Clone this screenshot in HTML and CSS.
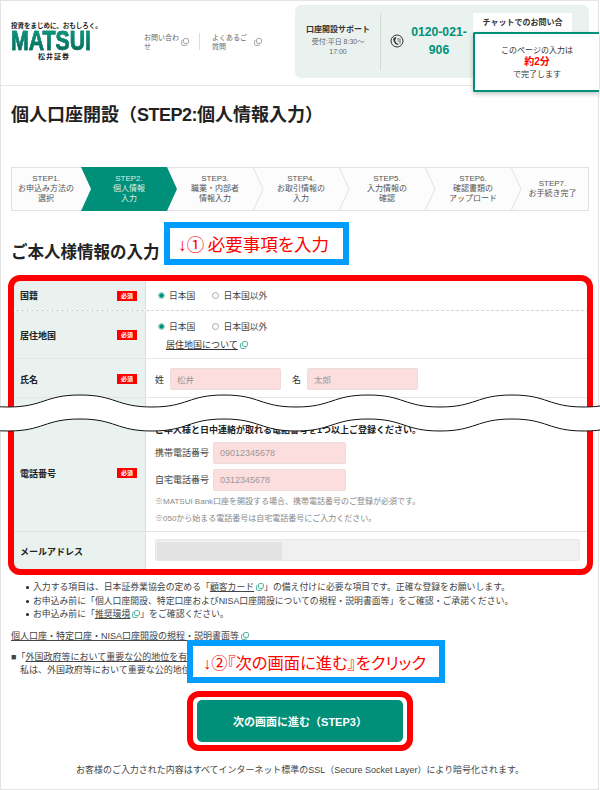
FILE: index.html
```html
<!DOCTYPE html>
<html lang="ja">
<head>
<meta charset="utf-8">
<title>個人口座開設</title>
<link rel="stylesheet" href="styles.css">
</head>
<body>
<svg class="defs" width="0" height="0" aria-hidden="true">
  <symbol id="ext" viewBox="0 0 8 8">
    <rect x="2.6" y="0.6" width="4.8" height="4.8" rx="1.1" fill="none" stroke="currentColor" stroke-width="0.9"/>
    <path d="M1.6 2.2 A1 1 0 0 0 .6 3.2 V6.4 A1 1 0 0 0 1.6 7.4 H4.8 A1 1 0 0 0 5.8 6.4" fill="none" stroke="currentColor" stroke-width="0.9"/>
  </symbol>
</svg>
<div class="page">
  <header class="header">
    <div class="logo">
      <div class="tagline">投資をまじめに、おもしろく。</div>
      <div class="wordmark">MATSUI</div>
      <div class="kanji">松井証券</div>
    </div>
    <a class="hlink hlink-first"><span class="hlink-text">お問い合わせ</span><svg class="ext ext-gray"><use href="#ext"/></svg></a>
    <a class="hlink hlink-second"><span class="hlink-text">よくあるご質問</span><svg class="ext ext-gray"><use href="#ext"/></svg></a>
    <div class="support">
      <div class="hours">
        <div class="hours-title">口座開設サポート</div>
        <div class="hours-text">受付:平日 8:30〜<br>17:00</div>
      </div>
      <svg class="phone-icon" viewBox="0 0 14 14">
        <circle cx="7" cy="7" r="6" fill="none" stroke="#333" stroke-width="1"/>
        <path d="M3.4 4.6C4 3.4 5.4 3 6.4 3.4L5.6 5.2C5.1 5.4 5 6.6 5.6 7.8 6.2 8.9 7 9.4 7.6 9.4L8.8 10.4C7.4 11.4 5.6 10.6 4.4 8.6 3.4 7 3 5.6 3.4 4.6Z" fill="#333"/>
        <path d="M7.2 5H11M7.6 7H11M9 9H11" stroke="#333" stroke-width=".7" fill="none"/>
      </svg>
      <div class="tel">0120-021-<br>906</div>
      <div class="chat">チャットでのお問い合わせ</div>
    </div>
  </header>

  <div class="main">
    <h1 class="title">個人口座開設（<span class="title-latin">STEP2:</span>個人情報入力）</h1>

    <ol class="steps">
      <li class="step step-start"><span>STEP1.<br>お申込み方法の<br>選択</span></li>
      <li class="step step-active"><span>STEP2.<br>個人情報<br>入力</span></li>
      <li class="step"><span>STEP3.<br>職業・内部者<br>情報入力</span><svg class="chev" viewBox="0 0 11 44"><path d="M0 0L10 22L0 44"/></svg></li>
      <li class="step"><span>STEP4.<br>お取引情報の<br>入力</span><svg class="chev" viewBox="0 0 11 44"><path d="M0 0L10 22L0 44"/></svg></li>
      <li class="step"><span>STEP5.<br>入力情報の<br>確認</span><svg class="chev" viewBox="0 0 11 44"><path d="M0 0L10 22L0 44"/></svg></li>
      <li class="step"><span>STEP6.<br>確認書類の<br>アップロード</span><svg class="chev" viewBox="0 0 11 44"><path d="M0 0L10 22L0 44"/></svg></li>
      <li class="step step-end"><span>STEP7.<br>お手続き完了</span></li>
    </ol>

    <h2 class="section">ご本人様情報の入力</h2>

    <div class="form">
      <div class="row row-dashed row-a">
        <div class="label"><span>国籍</span><em class="req">必須</em></div>
        <div class="field">
          <div class="radios"><span class="radio radio-on">日本国</span><span class="radio">日本国以外</span></div>
        </div>
      </div>
      <div class="row row-b">
        <div class="label"><span>居住地国</span><em class="req">必須</em></div>
        <div class="field field-stack">
          <div class="radios"><span class="radio radio-on">日本国</span><span class="radio">日本国以外</span></div>
          <a class="residence-link"><u>居住地国について</u><svg class="ext"><use href="#ext"/></svg></a>
        </div>
      </div>
      <div class="row row-c">
        <div class="label"><span>氏名</span><em class="req">必須</em></div>
        <div class="field names">
          <span>姓</span><span class="input input-name">松井</span>
          <span class="name-gap">名</span><span class="input input-name">太郎</span>
        </div>
      </div>
      <div class="row row-d">
        <div class="label"><span>電話番号</span><em class="req">必須</em></div>
        <div class="field field-phone">
          <div class="phone-lead">ご本人様と日中連絡が取れる電話番号を1つ以上ご登録ください。</div>
          <div class="phone-line"><span class="phone-label">携帯電話番号</span><span class="input input-phone">09012345678</span></div>
          <div class="phone-line"><span class="phone-label">自宅電話番号</span><span class="input input-phone">0312345678</span></div>
          <p class="note">※MATSUI Bank口座を開設する場合、携帯電話番号のご登録が必須です。</p>
          <p class="note">※050から始まる電話番号は自宅電話番号にご入力ください。</p>
        </div>
      </div>
      <div class="row row-e">
        <div class="label"><span>メールアドレス</span></div>
        <div class="field"><div class="mail"><div class="mail-fill"></div></div></div>
      </div>
    </div>

    <ul class="bullets">
      <li>入力する項目は、日本証券業協会の定める「<u>顧客カード</u><svg class="ext"><use href="#ext"/></svg>」の備え付けに必要な項目です。正確な登録をお願いします。</li>
      <li>お申込み前に「個人口座開設、特定口座およびNISA口座開設についての規程・説明書面等」をご確認・ご承諾ください。</li>
      <li>お申込み前に「<u>推奨環境</u><svg class="ext"><use href="#ext"/></svg>」をご確認ください。</li>
    </ul>

    <a class="doc-link"><u>個人口座・特定口座・NISA口座開設の規程・説明書面等</u><svg class="ext"><use href="#ext"/></svg></a>

    <div class="decl">
      <p class="decl-head">■「<u>外国政府等において重要な公的地位を有する者</u>」について</p>
      <p class="decl-body">私は、外国政府等において重要な公的地位を有する者ではありません。</p>
    </div>

    <div class="action">
      <div class="action-frame"><a class="next">次の画面に進む（STEP3）</a></div>
    </div>

    <p class="footnote">お客様のご入力された内容はすべてインターネット標準のSSL（Secure Socket Layer）により暗号化されます。</p>
  </div>

  <div class="popup">このページの入力は<br><strong>約2分</strong><br>で完了します</div>
  <div class="callout callout-one">↓①&#8201;必要事項を入力</div>
  <div class="callout callout-two">↓②『次の画面に進む』をクリック</div>
  <div class="red-frame"></div>
  <svg class="tear" viewBox="0 0 600 38" preserveAspectRatio="none">
    <path class="tear-fill" d="M-64 0C-28 0-28 12 8 12S44 0 80 0 116 12 152 12 188 0 224 0 260 12 296 12 332 0 368 0 404 12 440 12 476 0 512 0 548 12 584 12 620 0 656 0V24C620 24 620 36 584 36S548 24 512 24 476 36 440 36 404 24 368 24 332 36 296 36 260 24 224 24 188 36 152 36 116 24 80 24 44 36 8 36-28 24-64 24Z"/>
    <path class="tear-line" d="M-64 0C-28 0-28 12 8 12S44 0 80 0 116 12 152 12 188 0 224 0 260 12 296 12 332 0 368 0 404 12 440 12 476 0 512 0 548 12 584 12 620 0 656 0"/>
    <path class="tear-line" d="M-64 24C-28 24-28 36 8 36S44 24 80 24 116 36 152 36 188 24 224 24 260 36 296 36 332 24 368 24 404 36 440 36 476 24 512 24 548 36 584 36 620 24 656 24"/>
  </svg>
</div>
</body>
</html>
```
FILE: styles.css
```css
* { box-sizing: border-box; }
html, body { margin: 0; padding: 0; background: #fff; }
body { font-family: "Liberation Sans", "Noto Sans CJK JP", sans-serif; color: #333; }
.defs { position: absolute; }
.page { position: relative; width: 599px; height: 790px; border: 1px solid #e4e4e4; overflow: visible; background: #fff; }
p, h1, h2, ol, ul { margin: 0; padding: 0; }
u { text-underline-offset: 1px; }

.ext { display: inline-block; width: 8px; height: 8px; color: #3aa893; vertical-align: -1px; margin-left: 2px; }
.ext-gray { color: #999; margin-left: 0; flex: none; }

/* header */
.header { display: flex; align-items: center; height: 85px; padding: 4px 9px 7px 10px; border-bottom: 1px solid #e6e6e6; }
.logo { width: 133px; flex: none; }
.tagline { font-size: 6.5px; font-weight: 700; line-height: 8px; color: #222; white-space: nowrap; }
.wordmark { width: 110px; font-size: 28px; line-height: 21px; font-weight: 700; transform: scaleX(.76); transform-origin: 0 50%; -webkit-text-stroke: .6px #0b7f6b; background: linear-gradient(#0a9a80, #0a6a58); -webkit-background-clip: text; background-clip: text; color: transparent; white-space: nowrap; }
.kanji { width: 86px; text-align: center; font-size: 7px; line-height: 11px; font-weight: 700; letter-spacing: 1px; color: #222; }
.hlink { display: flex; align-items: center; gap: 2px; height: 17px; font-size: 7px; line-height: 9px; color: #666; flex: none; }
.hlink-text { width: 35px; }
.hlink-first { width: 56px; border-right: 1px solid #ddd; }
.hlink-second { width: 95px; padding-left: 12px; }
.hlink-second .hlink-text { margin-right: 5px; }
.support { display: flex; align-items: flex-start; flex: 1; height: 73px; background: #e9f2ef; border-radius: 6px; padding: 8px; position: relative; }
.hours { width: 78px; height: 57px; border-right: 1px solid #d5d9d7; padding-top: 10px; text-align: center; margin-right: 9px; flex: none; }
.hours-title { font-size: 8px; line-height: 13px; font-weight: 700; color: #333; white-space: nowrap; padding-right: 7px; }
.hours-text { font-size: 7px; line-height: 10px; color: #666; padding-right: 7px; padding-top: 1px; }
.phone-icon { width: 14px; height: 14px; margin-top: 21px; flex: none; }
.tel { width: 56px; margin-left: 7px; margin-top: 10px; font-size: 12.2px; line-height: 18px; font-weight: 700; color: #00907a; text-align: center; flex: none; white-space: nowrap; }
.chat { width: 99px; height: 40px; margin-left: 6px; background: #fff; text-align: center; padding: 3px 9px 0; font-size: 8px; line-height: 14px; font-weight: 700; color: #333; overflow: hidden; flex: none; }

/* main */
.main { padding: 0 9px 0 10px; }
.title { margin-top: 15px; font-size: 18px; line-height: 28px; font-weight: 700; color: #222; white-space: nowrap; }
.title-latin { letter-spacing: -.5px; }

.steps { display: flex; list-style: none; height: 44px; margin-top: 38px; border: 1px solid #e2e2e2; background: #fcfcfc; }
.step { position: relative; flex: none; width: 96px; margin-left: -10px; margin-top: -1px; height: 44px; display: flex; align-items: center; justify-content: center; text-align: center; font-size: 8px; line-height: 10px; color: #555; }
.step span { white-space: nowrap; }
.step-start { width: 78px; margin-left: 0; padding-right: 10px; }
.step-active { z-index: 2; background: #00907a; color: #d9efe9; margin-left: -9px; clip-path: polygon(0 0, 86px 0, 96px 50%, 86px 100%, 0 100%, 10px 50%); }
.step-end { width: 77px; padding-left: 6px; }
.chev { position: absolute; left: 86px; top: 0; width: 11px; height: 44px; }
.chev path { fill: none; stroke: #e2e2e2; stroke-width: 1; }

.section { margin-top: 29px; font-size: 16.5px; line-height: 24px; font-weight: 700; color: #222; white-space: nowrap; }

/* form */
.form { margin-top: 15px; background: #fff; }
.row { display: grid; grid-template-columns: 135px 1fr; border-bottom: 1px solid #e6e6e6; }
.row-dashed { border-bottom: 1px dashed #d5d5d5; }
.row-a { height: 32px; }
.row-b { height: 48px; }
.row-c { height: 39px; }
.row-d { height: 134px; border-bottom-color: #e2e2e2; }
.row-e { height: 38px; border-bottom: 0; }
.label { display: flex; align-items: center; justify-content: space-between; padding: 0 8px 0 9px; background: #e9f2ef; border-right: 1px solid #d9dfdd; font-size: 9px; font-weight: 700; color: #222; }
.row-a .label, .row-c .label { padding-top: 2px; }
.row-b .label { padding-top: 1px; }
.row-d .label { padding-top: 17px; }
.req { width: 20px; height: 10px; background: #f00; color: #fff; font-size: 6px; line-height: 10px; font-style: normal; text-align: center; font-weight: 700; }
.field { padding: 0 9px; display: flex; align-items: center; font-size: 9px; min-width: 0; }
.row-a .field { padding-top: 2px; }
.field-stack { flex-direction: column; align-items: flex-start; padding-top: 6px; }
.radios { display: flex; gap: 17px; height: 18px; align-items: center; padding-left: 3px; font-size: 8.8px; }
.radio { display: flex; align-items: center; gap: 4px; color: #444; }
.radio::before { content: ""; width: 7px; height: 7px; border-radius: 50%; border: 1px solid #aaa; background: #fff; box-sizing: border-box; }
.radio-on::before { border: 1px solid #8ccbbd; background: radial-gradient(circle, #00907a 0 1.9px, #c9e6df 2.5px); }
.residence-link { margin-top: 1px; padding-left: 11px; color: #333; line-height: 18px; }
.names { padding-top: 2px; }
.input { display: flex; align-items: center; background: #fddede; border: 1px solid #ecdcdc; border-radius: 2px; color: #999; padding-left: 6px; }
.input-name { width: 111px; height: 22px; margin-left: 6px; font-size: 8.5px; }
.name-gap { margin-left: 11px; }
.field-phone { flex-direction: column; align-items: flex-start; padding-top: 26px; }
.phone-lead { font-weight: 700; color: #222; line-height: 12px; white-space: nowrap; margin-bottom: 3px; }
.phone-line { display: flex; align-items: center; height: 27px; }
.phone-label { width: 58px; color: #444; white-space: nowrap; }
.input-phone { width: 133px; height: 22px; font-size: 9px; }
.note { font-size: 8px; line-height: 17px; color: #888; white-space: nowrap; }
.mail { width: 425px; height: 22px; background: #f0f0f0; border: 1px solid #e8e8e8; border-radius: 2px; padding: 2px 0 0 1px; }
.mail-fill { width: 125px; height: 100%; background: #e3e3e3; }
.row-e .field { padding-bottom: 2px; }

/* below form */
.bullets { list-style: none; margin-top: 11px; font-size: 8.85px; line-height: 13.5px; color: #444; padding-left: 22px; }
.bullets li { position: relative; white-space: nowrap; }
.bullets li::before { content: ""; position: absolute; left: -7px; top: 5px; width: 3px; height: 3px; border-radius: 50%; background: #222; }
.doc-link { display: block; margin-top: 7px; font-size: 9px; line-height: 14px; color: #444; white-space: nowrap; }
.decl { margin-top: 8px; font-size: 9px; line-height: 13.5px; color: #444; white-space: nowrap; }
.decl-body { padding-left: 9px; }
.action { display: flex; justify-content: center; margin-top: 13.5px; }
.action-frame { width: 226px; height: 60px; border: 6px solid #f00; border-radius: 12px; padding: 3px 4px; background: #fff; }
.next { display: flex; align-items: center; justify-content: center; height: 42px; background: #00907a; border-radius: 5px; color: #fff; font-size: 11px; font-weight: 700; }
.footnote { margin-top: 12.5px; text-align: center; font-size: 8.97px; line-height: 13px; color: #444; white-space: nowrap; }

/* overlays */
.popup { position: absolute; left: 472px; top: 31px; width: 126px; height: 60px; background: #fff; border: 2px solid #00907a; border-right: 0; border-radius: 2px 0 0 2px; box-shadow: 0 2px 5px rgba(0,0,0,.25); text-align: center; font-size: 8px; line-height: 11.5px; padding-top: 10.5px; color: #333; }
.popup strong { color: #f00; font-size: 10px; }
.callout { position: absolute; background: #fff; border: 6px solid #009dff; color: #f00; white-space: nowrap; display: flex; align-items: center; font-feature-settings: "palt"; }
.callout-one { left: 163px; top: 221px; width: 185px; height: 43px; padding-left: 8px; font-size: 17.5px; }
.callout-two { left: 186px; top: 639px; width: 258px; height: 43px; padding-left: 10px; font-size: 16.3px; }
.red-frame { position: absolute; left: 7px; top: 274px; width: 585px; height: 300px; border: 6px solid #f00; border-radius: 12px; }
.tear { position: absolute; left: -1px; top: 394px; width: 600px; height: 38px; overflow: visible; }
.tear-fill { fill: #fff; }
.tear-line { fill: none; stroke: #111; stroke-width: 1; }
```
